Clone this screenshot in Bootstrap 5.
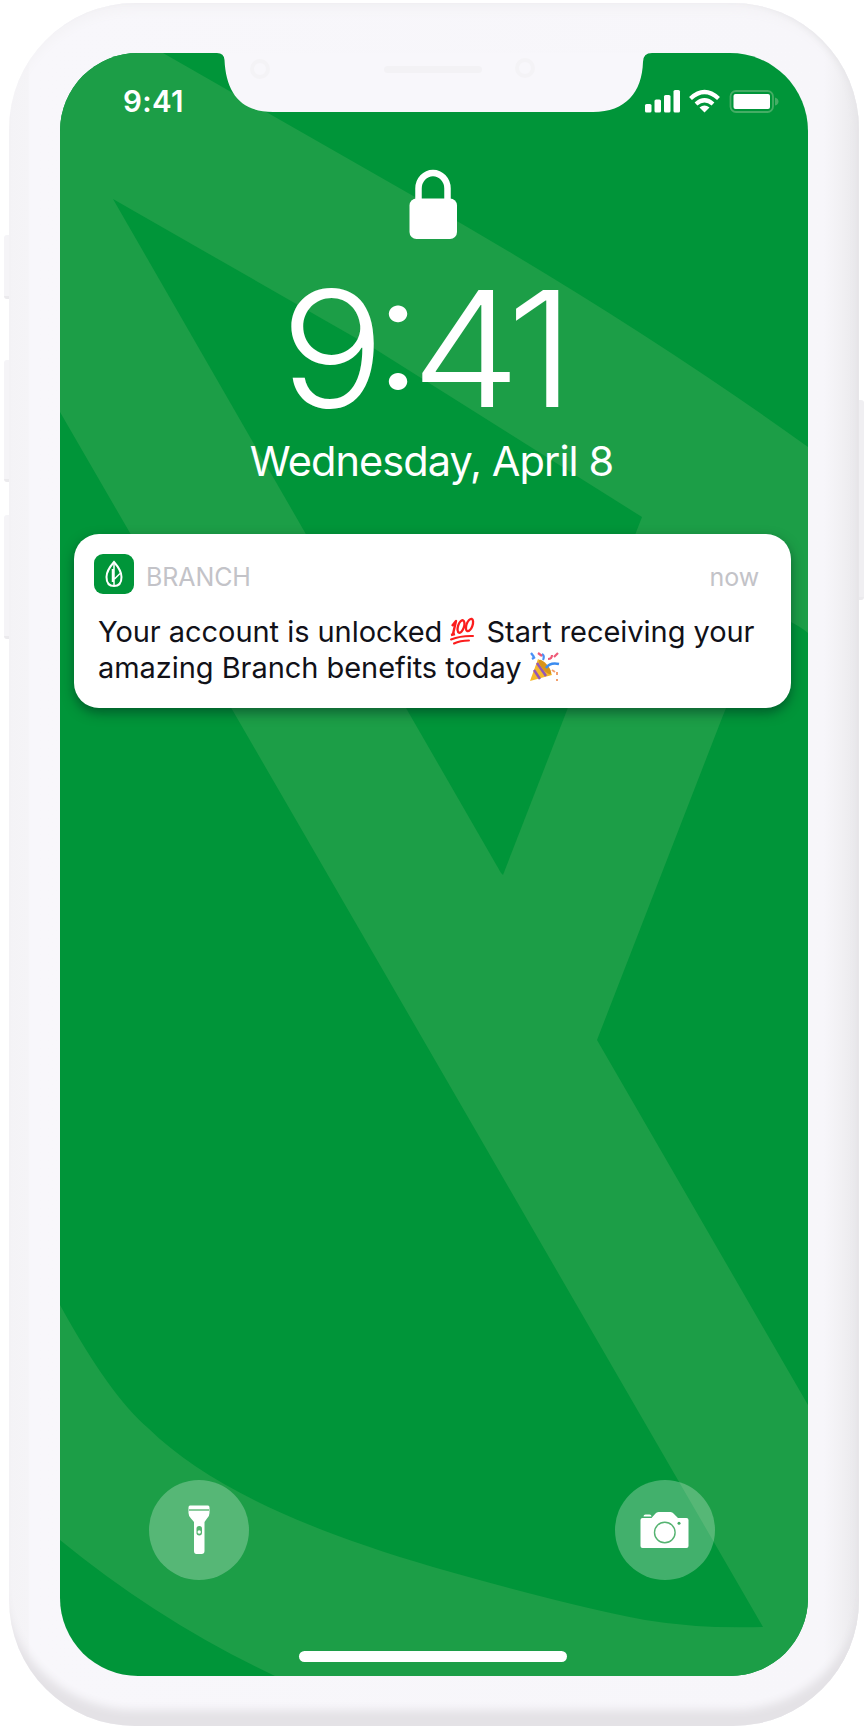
<!DOCTYPE html>
<html lang="en">
<head>
<meta charset="utf-8">
<meta name="viewport" content="width=device-width, initial-scale=1">
<title>Branch lock screen</title>
<link href="https://cdn.jsdelivr.net/npm/bootstrap@5.3.0/dist/css/bootstrap.min.css" rel="stylesheet">
<style>
body{font-family:Inter,"Liberation Sans",sans-serif;background:#fff;overflow:hidden}
svg{display:block;flex:none}
.phone{width:850px;height:1723px;margin:3px 0 0 9px;padding:50px 51px 51px;border-radius:126px;
  background:linear-gradient(90deg,#f4f3f6 0,#f5f4f7 19px,#f8f7fb 21px,#f7f6fa 815px,#f1f0f3 832px,#e9e8eb 850px);
  box-shadow:inset 0 -22px 8px -6px #e4e2e6,inset -5px 0 6px -2px #e6e5e8,inset 0 14px 10px -6px #f4f3f6}
.side-key{position:absolute;width:6px;background:#f5f4f7;border-bottom:3px solid #ebeaed}
.side-key.l{left:4px;border-radius:3px 0 0 3px}
.side-key.r{left:858px;border-radius:0 3px 3px 0;background:#f0eff2}
.key-mute{top:235px;height:64px}
.key-up{top:360px;height:122px}
.key-down{top:515px;height:124px}
.key-power{top:400px;height:200px}
.screen{width:748px;height:1623px;border-radius:78px;background:#009539;color:#fff}
.statusbar{height:96px;padding:0 28px 0 63px}
.status-time{font-size:29.500px;font-weight:600;line-height:34px;letter-spacing:.3px}
.lock{margin:20px 0 0 348px}
.clock{font-size:161px;font-weight:300;line-height:160px;letter-spacing:-10.500px;margin:28px 24px 0 0;transform:scaleX(1.08)}
.colon{position:relative;top:-18px}
.date{font-size:41.500px;font-weight:400;line-height:50px;letter-spacing:-.930px;margin:7px 5px 0 0}
.notice{width:717px;height:174px;border-radius:25px;margin:48px 0 0 14px;padding:20px 32px 0 20px;box-shadow:0 5px 12px rgba(0,40,30,.5)}
.notice header{height:40px}
.app-icon{width:40px;height:40px;border-radius:9px;background:#009539}
.app-name{font-size:25px;font-weight:400;color:#c3c3c8;letter-spacing:-.1px;padding-top:8px}
.message{font-size:29px;line-height:36px;color:#111118;margin:20px -20px 0 4px;white-space:nowrap;letter-spacing:-.05px}
.message svg{display:inline-block;position:relative;top:-3px;left:-2px}
.quick{padding:0 93px 0 89px;margin-bottom:71px}
.round-btn{width:100px;height:100px;background:rgba(255,255,255,.26)}
.home-bar{width:268px;height:11px;border-radius:6px;background:#fff;margin:0 0 14px 239px}
</style>
</head>
<body>
<span class="side-key l key-mute"></span>
<span class="side-key l key-up"></span>
<span class="side-key l key-down"></span>
<span class="side-key r key-power"></span>
<main class="phone position-relative">
  <div class="screen position-relative overflow-hidden">
    <!-- wallpaper -->
    <svg class="position-absolute top-0 start-0" width="748" height="1623" viewBox="60 53 748 1623" aria-hidden="true">
      <path fill="#1c9e47" d="M60 53H163L415 197Q630 319 808 447V633Q777 609 762 625Q742 668 722 718L597 1040L808 1405V1676H275Q160 1622 60 1540V1305Q110 1396 148 1428C205 1484 300 1528 433 1567Q570 1606 645 1620Q700 1629 763 1627L60 412Z"/>
      <path fill="#009539" d="M113 199L375 349L642 517L503 875L501 873Z"/>
    </svg>
    <!-- sensor housing -->
    <svg class="position-absolute top-0 start-0" width="748" height="60" viewBox="60 53 748 60" aria-hidden="true">
      <path fill="#f8f7fb" d="M217 53Q224 53 224.500 60C226 92 240 112 273 112H593C626 112 642 92 643 62Q643 53 652 53Z"/>
      <circle cx="260" cy="69" r="8" fill="none" stroke="#f4f3f6" stroke-width="4"/>
      <circle cx="525" cy="68" r="8" fill="none" stroke="#f4f3f6" stroke-width="4"/>
      <rect x="384" y="66" width="98" height="7" rx="3.500" fill="#f3f2f5"/>
    </svg>
    <div class="position-relative d-flex flex-column h-100">
      <div class="statusbar d-flex align-items-center justify-content-between">
        <span class="status-time">9:41</span>
        <svg width="136" height="24" viewBox="644 88 136 24" fill="#fff">
          <rect x="645" y="103" width="6.500" height="8.500" rx="1.600"/><rect x="654.500" y="98.500" width="6.500" height="13" rx="1.600"/><rect x="664" y="94" width="6.500" height="17.500" rx="1.600"/><rect x="673.500" y="89" width="6.500" height="22.500" rx="1.600"/>
          <g fill="none" stroke="#fff" stroke-width="4.200"><path d="M690.500 97.500Q704.500 84.500 718.500 97.500"/><path d="M696 103Q704.500 95.500 713 103"/></g>
          <path d="M699.500 106.500Q704.500 102.500 709.500 106.500L704.500 111.500Z"/>
          <rect x="730.500" y="90" width="42.500" height="21" rx="5.500" fill="none" stroke="#45ad65" stroke-width="1.800"/>
          <rect x="733.500" y="93" width="36.500" height="15" rx="2"/><path fill="#45ad65" d="M775 96.500q3.500 1 3.500 4t-3.500 4z"/>
        </svg>
      </div>
      <svg class="lock" width="50" height="72" viewBox="408 169 50 72">
        <path d="M418.500 202V188.500A14.500 15.500 0 0 1 447.500 188.500V202" fill="none" stroke="#fff" stroke-width="6.500"/>
        <rect x="409.500" y="198.500" width="47.500" height="40.500" rx="7" fill="#fff"/>
      </svg>
      <div class="clock text-center">9<span class="colon">:</span>41</div>
      <div class="date text-center">Wednesday, April 8</div>
      <section class="notice bg-white">
        <header class="d-flex align-items-center">
          <span class="app-icon d-flex align-items-center justify-content-center">
            <svg width="20" height="28" viewBox="0 0 20 28" fill="none" stroke="#fff" stroke-width="2"><path d="M10 2Q2.500 10.500 2.500 17Q2.500 26 10 26T17.500 17Q17.500 10.500 10 2Z"/><path d="M10 4V25M10.500 19L16 13.500M8.500 9V22" stroke-width="1.500"/></svg>
          </span>
          <span class="app-name ms-2 ps-1">BRANCH</span>
          <span class="app-name ms-auto">now</span>
        </header>
        <div class="message">Your account is unlocked <svg role="img" aria-label="100" width="28" height="28" viewBox="0 0 28 28"><path d="M4 9L8 4L5 17M3 18L7 17" stroke="#fb1d1d" stroke-width="2.400" fill="none" stroke-linejoin="round"/><g fill="none" stroke="#fb1d1d" stroke-width="2.300"><ellipse cx="13" cy="9.500" rx="3" ry="6.500" transform="rotate(18 13 9.500)"/><ellipse cx="21.500" cy="8" rx="3" ry="6.500" transform="rotate(20 21.500 8)"/></g><path d="M3 22.500Q13 18.500 25 19M6 26.500Q12 23.500 21 23.500" stroke="#fb1d1d" stroke-width="2" fill="none" stroke-linecap="round"/></svg> Start receiving your<br>amazing Branch benefits today <svg role="img" aria-label="Party popper" width="32" height="32" viewBox="0 0 32 32"><path d="M2 30L10 8Q20 13 24 24Z" fill="#f5b92b"/><path d="M9 12L18 25M6 19L12 28" stroke="#9457b5" stroke-width="2.500"/><ellipse cx="17" cy="16" rx="3" ry="9" transform="rotate(-40 17 16)" fill="#d9941a"/><path d="M18 17Q22 11 31 13" stroke="#3b8cf0" stroke-width="2.500" fill="none"/><path d="M3 2l3 4M7 6L4 8M14 3q3 2 1 6" stroke="#4a90f5" stroke-width="2.200" fill="none"/><path d="M10 2l4 3M20 8q4 0 4-4M26 6l4-4" stroke="#ef5a78" stroke-width="2.200" fill="none"/><path d="M24 19l3 2M29 21v3M29 28v2" stroke="#f3a06d" stroke-width="2"/></svg></div>
      </section>
      <div class="quick d-flex justify-content-between mt-auto">
        <span class="round-btn rounded-circle d-flex align-items-center justify-content-center">
          <svg width="24" height="50" viewBox="0 0 24 50"><path fill="#fff" d="M3 .5H21Q22.500 .5 22.500 2.500V8Q22.500 11 20 13.500L17.500 17V46Q17.500 49 14.500 49H9.500Q7 49 7 46V17L4 13.500Q1.500 11 1.500 8V2.500Q1.500 .5 3 .5Z"/><path stroke="#65bb7c" stroke-width="1.500" d="M2 5H22"/><rect x="9.500" y="21" width="5.500" height="9.500" rx="2.700" fill="#56b570"/><circle cx="12.200" cy="27" r="1.700" fill="#fff"/></svg>
        </span>
        <span class="round-btn rounded-circle d-flex align-items-center justify-content-center">
          <svg width="50" height="38" viewBox="0.500 0 50 38"><path fill="#fff" d="M3 7H12L16 2.500Q17 1 19 1H31Q33 1 34 2.500L38.500 7H47Q49 7 49 9V35Q49 37 47 37H3Q1 37 1 35V9Q1 7 3 7ZM6 3.500h4q2 0 2 2H4q0-2 2-2Z"/><circle cx="25.300" cy="21.500" r="10.300" fill="none" stroke="#55b371" stroke-width="1.400"/><circle cx="39.500" cy="12.300" r="1.500" fill="#45ad65"/></svg>
        </span>
      </div>
      <div class="home-bar"></div>
    </div>
  </div>
</main>
<script src="https://cdn.jsdelivr.net/npm/bootstrap@5.3.0/dist/js/bootstrap.bundle.min.js"></script>
</body>
</html>
